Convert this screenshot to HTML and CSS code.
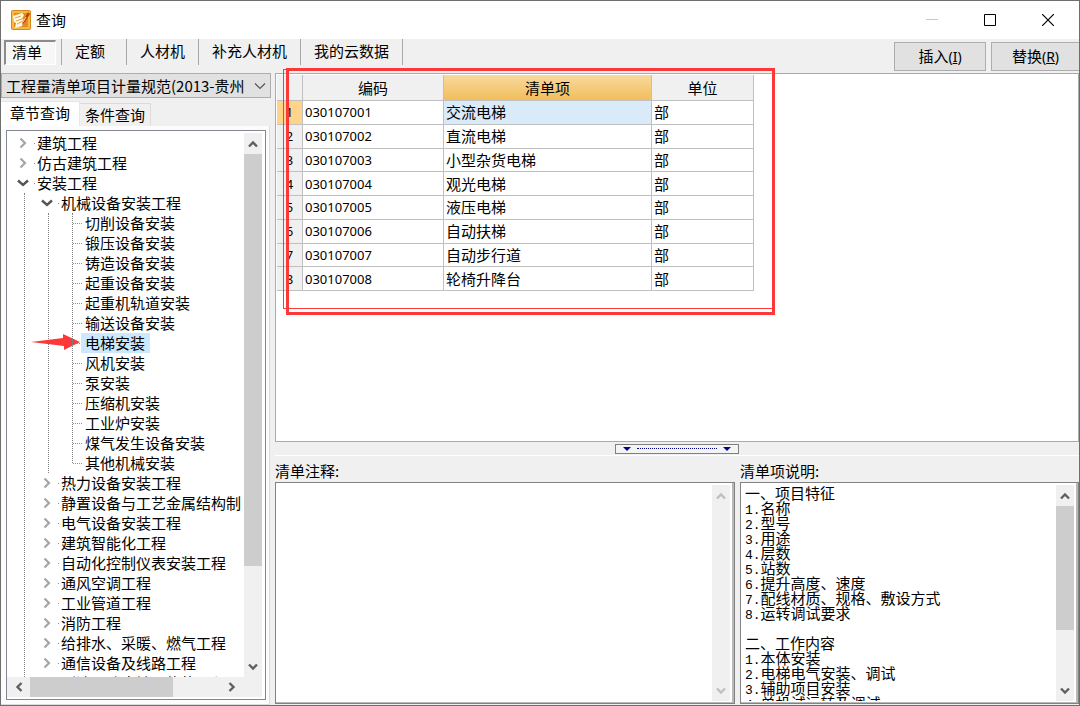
FILE: index.html
```html
<!DOCTYPE html>
<html lang="zh-CN">
<head>
<meta charset="utf-8">
<title>查询</title>
<link rel="stylesheet" href="styles.css">
</head>
<body>
<svg class="defs" aria-hidden="true">
  <symbol id="up" viewBox="0 0 10 8"><path d="M1 6.5 5 2.5 9 6.5" fill="none" stroke="currentColor" stroke-width="2.4"/></symbol>
  <symbol id="down" viewBox="0 0 10 8"><path d="M1 1.5 5 5.5 9 1.5" fill="none" stroke="currentColor" stroke-width="2.4"/></symbol>
  <symbol id="left" viewBox="0 0 8 10"><path d="M6.5 1 2.5 5 6.5 9" fill="none" stroke="currentColor" stroke-width="2.4"/></symbol>
  <symbol id="right" viewBox="0 0 8 10"><path d="M1.5 1 5.5 5 1.5 9" fill="none" stroke="currentColor" stroke-width="2.4"/></symbol>
  <symbol id="closed" viewBox="0 0 12 12"><path d="M3.5 1.5 8 6 3.5 10.5" fill="none" stroke="#a6a6a6" stroke-width="2.2"/></symbol>
  <symbol id="opened" viewBox="0 0 12 12"><path d="M1 3.5 6 8 11 3.5" fill="none" stroke="#555" stroke-width="2.4"/></symbol>
</svg>
<div class="window">
  <header class="titlebar">
    <svg class="logo" viewBox="0 0 20 20" aria-hidden="true">
      <rect width="20" height="20" rx="2" fill="#d9861c"/>
      <rect x="1" y="1" width="18" height="18" rx="1" fill="#f6b846"/>
      <path d="M3 3h14v14H3z" fill="#e8891b"/>
      <path d="M2 6 11 3l2 2-2 4 3 1-3 6-7 2 1-5-2-1z" fill="#fff8dc"/>
      <path d="m4 8 6-2M5 11l6-2M6 14l6-3" stroke="#dba24b" stroke-width="1" fill="none"/>
      <path d="M17 2 12 11l-1 4 3-3 5-8z" fill="#b8420c"/>
      <path d="m15 7-3 5" stroke="#ffe29a" stroke-width="1"/>
    </svg>
    <h1 class="title">查询</h1>
    <div class="controls">
      <button class="control muted" aria-label="最小化"><svg viewBox="0 0 12 12"><path d="M0 5.5h12" stroke="currentColor"/></svg></button>
      <button class="control" aria-label="最大化"><svg viewBox="0 0 12 12"><path d="M.5.5h11v11H.5z" fill="none" stroke="currentColor"/></svg></button>
      <button class="control" aria-label="关闭"><svg viewBox="0 0 12 12"><path d="m0 0 12 12M12 0 0 12" stroke="currentColor" stroke-width="1.2"/></svg></button>
    </div>
  </header>

  <nav class="toolbar">
    <button class="mode pressed">清单</button>
    <span class="modes">
      <button class="mode">定额</button>
      <button class="mode">人材机</button>
      <button class="mode">补充人材机</button>
      <button class="mode">我的云数据</button>
    </span>
    <span class="actions">
      <button class="action">插入<span class="key">(<u>I</u>)</span></button>
      <button class="action last">替换<span class="key">(<u>R</u>)</span></button>
    </span>
  </nav>

  <main class="main">
    <aside class="sidebar">
      <div class="picker">
        <select class="select" aria-label="规范"><option>工程量清单项目计量规范(2013-贵州</option></select>
        <svg class="picker-arrow" viewBox="0 0 12 8" aria-hidden="true"><path d="m1 1.5 5 5 5-5" fill="none" stroke="#555" stroke-width="1.2"/></svg>
      </div>
      <div class="tabs">
        <button class="tab active">章节查询</button>
        <button class="tab">条件查询</button>
      </div>
      <div class="tabpanel">
        <div class="treebox">
          <div class="treeview">
            <ul class="tree">
              <li><div class="row"><svg class="twist"><use href="#closed"/></svg><span class="name">建筑工程</span></div></li>
              <li><div class="row"><svg class="twist"><use href="#closed"/></svg><span class="name">仿古建筑工程</span></div></li>
              <li><div class="row"><svg class="twist"><use href="#opened"/></svg><span class="name">安装工程</span></div>
                <ul class="tree nested">
                  <li><div class="row"><svg class="twist"><use href="#opened"/></svg><span class="name">机械设备安装工程</span></div>
                    <ul class="tree nested leaves">
                      <li class="row"><span class="name">切削设备安装</span></li>
                      <li class="row"><span class="name">锻压设备安装</span></li>
                      <li class="row"><span class="name">铸造设备安装</span></li>
                      <li class="row"><span class="name">起重设备安装</span></li>
                      <li class="row"><span class="name">起重机轨道安装</span></li>
                      <li class="row"><span class="name">输送设备安装</span></li>
                      <li class="row"><span class="name selected">电梯安装</span><svg class="pointer" viewBox="0 0 49 16" aria-hidden="true"><path d="M0 8 32 4V0L49 8 33 16v-4z" fill="#fd3838"/></svg></li>
                      <li class="row"><span class="name">风机安装</span></li>
                      <li class="row"><span class="name">泵安装</span></li>
                      <li class="row"><span class="name">压缩机安装</span></li>
                      <li class="row"><span class="name">工业炉安装</span></li>
                      <li class="row"><span class="name">煤气发生设备安装</span></li>
                      <li class="row"><span class="name">其他机械安装</span></li>
                    </ul>
                  </li>
                  <li><div class="row"><svg class="twist"><use href="#closed"/></svg><span class="name">热力设备安装工程</span></div></li>
                  <li><div class="row"><svg class="twist"><use href="#closed"/></svg><span class="name">静置设备与工艺金属结构制</span></div></li>
                  <li><div class="row"><svg class="twist"><use href="#closed"/></svg><span class="name">电气设备安装工程</span></div></li>
                  <li><div class="row"><svg class="twist"><use href="#closed"/></svg><span class="name">建筑智能化工程</span></div></li>
                  <li><div class="row"><svg class="twist"><use href="#closed"/></svg><span class="name">自动化控制仪表安装工程</span></div></li>
                  <li><div class="row"><svg class="twist"><use href="#closed"/></svg><span class="name">通风空调工程</span></div></li>
                  <li><div class="row"><svg class="twist"><use href="#closed"/></svg><span class="name">工业管道工程</span></div></li>
                  <li><div class="row"><svg class="twist"><use href="#closed"/></svg><span class="name">消防工程</span></div></li>
                  <li><div class="row"><svg class="twist"><use href="#closed"/></svg><span class="name">给排水、采暖、燃气工程</span></div></li>
                  <li><div class="row"><svg class="twist"><use href="#closed"/></svg><span class="name">通信设备及线路工程</span></div></li>
                  <li><div class="row"><span class="name">刷油、防腐蚀、绝热工程</span></div></li>
                </ul>
              </li>
            </ul>
          </div>
          <div class="vbar">
            <svg class="vicon"><use href="#up"/></svg>
            <div class="track"><div class="thumb tree-thumb"></div></div>
            <svg class="vicon"><use href="#down"/></svg>
          </div>
          <div class="hbar">
            <svg class="hicon"><use href="#left"/></svg>
            <div class="htrack"><div class="hthumb"></div></div>
            <svg class="hicon"><use href="#right"/></svg>
          </div>
        </div>
      </div>
    </aside>

    <section class="content">
      <div class="gridbox">
        <table class="grid">
          <colgroup><col class="c-no"><col class="c-code"><col class="c-item"><col class="c-unit"></colgroup>
          <thead><tr><th></th><th>编码</th><th class="sorted">清单项</th><th>单位</th></tr></thead>
          <tbody>
            <tr class="current"><th>1</th><td class="code">030107001</td><td class="item">交流电梯</td><td>部</td></tr>
            <tr><th>2</th><td class="code">030107002</td><td>直流电梯</td><td>部</td></tr>
            <tr><th>3</th><td class="code">030107003</td><td>小型杂货电梯</td><td>部</td></tr>
            <tr><th>4</th><td class="code">030107004</td><td>观光电梯</td><td>部</td></tr>
            <tr><th>5</th><td class="code">030107005</td><td>液压电梯</td><td>部</td></tr>
            <tr><th>6</th><td class="code">030107006</td><td>自动扶梯</td><td>部</td></tr>
            <tr><th>7</th><td class="code">030107007</td><td>自动步行道</td><td>部</td></tr>
            <tr><th>8</th><td class="code">030107008</td><td>轮椅升降台</td><td>部</td></tr>
          </tbody>
        </table>
        <div class="mark thin"></div>
        <div class="mark thick"></div>
      </div>

      <div class="splitter">
        <div class="handle"><span class="tri"></span><span class="dots"></span><span class="tri"></span></div>
      </div>

      <div class="details">
        <section class="pane notes">
          <label class="pane-title" for="notes">清单注释:</label>
          <div class="memo">
            <textarea id="notes" class="memo-text" readonly></textarea>
            <div class="vbar disabled">
              <svg class="vicon"><use href="#up"/></svg>
              <div class="track"></div>
              <svg class="vicon"><use href="#down"/></svg>
            </div>
          </div>
        </section>
        <section class="pane help">
          <h2 class="pane-title">清单项说明:</h2>
          <div class="memo">
            <div class="memo-text">
              <p>一、项目特征</p>
              <p><span class="n">1.</span>名称</p>
              <p><span class="n">2.</span>型号</p>
              <p><span class="n">3.</span>用途</p>
              <p><span class="n">4.</span>层数</p>
              <p><span class="n">5.</span>站数</p>
              <p><span class="n">6.</span>提升高度、速度</p>
              <p><span class="n">7.</span>配线材质、规格、敷设方式</p>
              <p><span class="n">8.</span>运转调试要求</p>
              <p></p>
              <p>二、工作内容</p>
              <p><span class="n">1.</span>本体安装</p>
              <p><span class="n">2.</span>电梯电气安装、调试</p>
              <p><span class="n">3.</span>辅助项目安装</p>
              <p><span class="n">4.</span>单机试运转及调试</p>
            </div>
            <div class="vbar">
              <svg class="vicon"><use href="#up"/></svg>
              <div class="track"><div class="thumb help-thumb"></div></div>
              <svg class="vicon"><use href="#down"/></svg>
            </div>
          </div>
        </section>
      </div>
    </section>
  </main>
</div>
</body>
</html>
```
FILE: styles.css
```css
* { box-sizing: border-box; }
html, body { height: 100%; }
body {
  margin: 0;
  overflow: hidden;
  color: #000;
  font: 15px/20px "Noto Sans CJK SC", sans-serif;
}
button, select, textarea { font: inherit; color: inherit; border-radius: 0; margin: 0; }
.defs { position: absolute; width: 0; height: 0; }

.window {
  height: 100%;
  display: flex;
  flex-direction: column;
  background: #f0f0f0;
  border: 1px solid #6e6e6e;
}

/* Title bar */
.titlebar { flex: none; height: 38px; display: flex; align-items: center; background: #fff; padding-left: 10px; }
.logo { width: 20px; height: 20px; }
.title { margin: 0 0 0 5px; font-size: 15px; font-weight: 400; line-height: 18px; }
.controls { margin-left: auto; padding-right: 2px; display: flex; height: 100%; }
.control { width: 58px; border: 0; padding: 0; background: none; display: grid; place-items: center; }
.control svg { width: 12px; height: 12px; }
.muted { color: #c8c8c8; }

/* Toolbar */
.toolbar { flex: none; height: 33px; display: flex; padding-left: 3px; }
.modes { display: flex; height: 26px; margin-left: 5px; border-left: 1px solid #a8a8a8; }
.mode { border: 0; border-right: 1px solid #a8a8a8; background: none; padding: 0 13px 2px; min-width: 65px; text-align: left; }
.pressed {
  height: 25px;
  min-width: 52px;
  padding: 0 6px 2px;
  margin-top: 1px;
  border: 1px solid #fff;
  border-top: 2px solid #8c8c8c;
  border-left: 2px solid #8c8c8c;
  background: #f7f7f7;
}
.actions { margin-left: auto; display: flex; gap: 5px; padding: 3px 0 1px; }
.action { width: 92px; border: 1px solid #adadad; background: #e1e1e1; padding: 0; }
.last { width: 88px; border-right: 0; }
.key { font: 14px/20px "Noto Sans", sans-serif; }

.main { flex: 1; min-height: 0; display: grid; grid-template-columns: 270px minmax(0, 1fr); column-gap: 4px; }

/* Sidebar */
.sidebar { min-height: 0; display: flex; flex-direction: column; }
.picker { position: relative; flex: none; height: 25px; margin: 1px 0 3px; }
.select { appearance: none; width: 100%; height: 100%; padding: 0 22px 0 4px; border: 1px solid #adadad; background: #e1e1e1; }
.picker-arrow { position: absolute; right: 5px; top: 9px; width: 12px; height: 8px; pointer-events: none; }
.tabs { flex: none; display: flex; align-items: flex-end; height: 25px; }
.tab { height: 23px; padding: 0 5px; border: 1px solid #dcdcdc; border-bottom: 0; border-left: 0; background: #f0f0f0; line-height: 18px; }
.tab.active { height: 25px; padding: 0 9px 2px; background: #fff; border-color: #e6e6e6; }
.tabpanel {
  flex: 1;
  min-height: 0;
  display: flex;
  padding: 4px 3px 4px 5px;
  background: #fcfcfc;
  border: 1px solid #dcdcdc;
  border-left: 0;
  border-top: 0;
  margin-right: 1px;
}
.treebox {
  flex: 1;
  min-width: 0;
  min-height: 0;
  display: grid;
  grid-template: minmax(0, 1fr) 20px / minmax(0, 1fr) 18px;
  padding: 2px 3px 2px 0;
  background: #fff;
  border: 1px solid #828790;
}
.treeview { overflow: hidden; }
.tree { position: relative; margin: 0; padding: 0; list-style: none; white-space: nowrap; }
.nested { margin-left: 24px; }
.nested::before { content: ""; position: absolute; left: -7px; top: 0; bottom: 0; border-left: 1px dotted #808080; }
.leaves::after { content: ""; position: absolute; left: 17px; top: 0; bottom: 10px; border-left: 1px dotted #808080; }
.row { position: relative; display: flex; align-items: center; height: 20px; padding-left: 26px; }
.row::before { content: ""; position: absolute; left: 27px; top: 10px; width: 1px; border-top: 1px solid #909090; }
.leaves .row::before { left: 18px; width: 9px; border-top-style: dotted; }
.twist { position: absolute; left: 10px; top: 4px; width: 12px; height: 12px; }
.name { position: relative; padding: 0 5px 0 4px; height: 20px; line-height: 19px; }
.selected { background: #cce8ff; }
.pointer { position: absolute; left: -24px; top: 1px; width: 49px; height: 16px; }

/* Scroll bars */
.vbar { display: flex; flex-direction: column; align-items: center; background: #f0f0f0; color: #606060; width: 18px; padding: 7px 0 6px; gap: 6px; }
.vicon { flex: none; width: 10px; height: 8px; }
.track { flex: 1; align-self: stretch; min-height: 0; }
.thumb { background: #cdcdcd; }
.tree-thumb { height: 82%; }
.help-thumb { height: 71%; }
.disabled { color: #bfbfbf; }
.hbar { grid-column: 1 / -1; display: flex; align-items: center; background: #f0f0f0; color: #606060; padding: 0 26px 0 8px; gap: 7px; }
.hicon { flex: none; width: 8px; height: 10px; }
.htrack { flex: 1; height: 100%; }
.hthumb { width: 75%; height: 100%; background: #cdcdcd; }

/* Result grid */
.content { min-width: 0; min-height: 0; display: flex; flex-direction: column; padding-top: 1px; }
.gridbox { position: relative; flex: 1; min-height: 0; padding: 1px; background: #fff; border: 1px solid #a9abb3; }
.grid { width: 477px; height: 216px; table-layout: fixed; border-collapse: separate; border-spacing: 0; }
.c-no { width: 26px; }
.c-code { width: 141px; }
.c-item { width: 208px; }
.c-unit { width: 102px; }
.grid th, .grid td { padding: 0 2px; border-right: 1px solid #c0c0c0; border-bottom: 1px solid #c0c0c0; font-weight: 400; line-height: 20px; text-align: left; }
.grid th { background: #f0f0f0; text-align: center; }
.grid thead th { height: 26px; }
.grid tbody th { font: 13px/20px "Noto Sans", sans-serif; }
.grid .sorted { background: linear-gradient(#f9d99f, #f1be5c); }
.grid .code { font: 13px/20px "Noto Sans", sans-serif; }
.grid .current th { background: #ffd48a; }
.current .item { background: #d9eaf8; }
.mark { position: absolute; pointer-events: none; }
.thin { left: 7px; top: -5px; width: 490px; height: 240px; border: 1px solid #fd3838; }
.thick { left: 10px; top: -6px; width: 489px; height: 247px; border: 3px solid #fd3838; }

/* Splitter */
.splitter { flex: none; height: 13px; display: flex; justify-content: center; align-items: center; }
.handle { width: 124px; height: 10px; display: flex; align-items: center; gap: 6px; padding: 0 7px; border: 1px solid #808080; background: #f4f4f4; }
.tri { border: 4px solid transparent; border-top-color: #00008b; border-bottom: 0; }
.dots { flex: 1; border-top: 1px dotted #00008b; }

/* Detail panes */
.details { flex: none; height: 250px; display: flex; gap: 5px; border-top: 1px solid #fff; }
.pane { flex: 460; min-width: 0; display: flex; flex-direction: column; }
.help { flex-grow: 339; }
.pane-title { flex: none; height: 26px; margin: 0; padding-top: 5px; font-size: 15px; font-weight: 400; }
.memo { flex: 1; min-height: 0; display: flex; padding: 2px 4px 2px 2px; margin-bottom: 1px; background: #fff; border: 1px solid #828282; box-shadow: inset -2px -1px #b8b8b8; }
.memo-text { flex: 1; min-width: 0; border: 0; padding: 0 2px; background: none; resize: none; outline: none; overflow: hidden; line-height: 15px; }
.memo-text p { margin: 0; height: 15px; white-space: nowrap; }
.n { font: 13px/15px "Liberation Mono", monospace; }
```
